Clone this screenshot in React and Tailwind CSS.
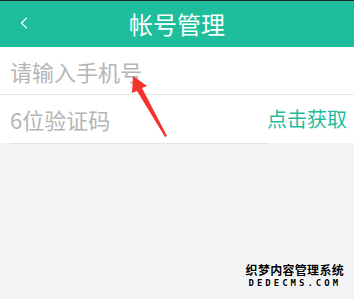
import { ChevronLeft } from 'lucide-react';

const cjk = { fontFamily: '"Noto Sans CJK SC", "Noto Sans", sans-serif' };

const App = () => {
  return (
    <div className="relative w-[354px] h-[299px] bg-[#f2f3f5] overflow-hidden" style={cjk}>
      <div className="h-px bg-[#1c2b2a]" />
      <header className="relative h-[46px] bg-[#1ebd9b] flex items-center justify-center">
        <ChevronLeft className="absolute left-[14px] top-[11px] w-[20px] h-[22px] text-white" strokeWidth={1.4} />
        <h1 className="text-[24px] leading-none text-white">帐号管理</h1>
      </header>

      <div className="bg-white">
        <div className="h-[48px] flex items-center pl-[10px] border-b border-[#e8e8e8]">
          <span className="text-[22px] leading-none text-[#b5b5b5]">请输入手机号</span>
        </div>
        <div className="h-[48px] flex items-center justify-between pl-[10px] pr-[7px]">
          <span className="text-[22px] leading-none text-[#b5b5b5]">6位验证码</span>
          <span className="text-[20px] leading-none text-[#1ebd9b]">点击获取</span>
        </div>
      </div>
      <div className="ml-[10px] w-[258px] h-px bg-[#e3e3e3]" />

      {/* red annotation arrow */}
      <svg className="absolute left-0 top-0" width="354" height="299" viewBox="0 0 354 299">
        <polygon points="133,76 147,86 142,88 167,136 165,137 137,91 132,93" fill="#f5322d" />
      </svg>

      <div className="absolute right-[10px] top-[264px] flex flex-col items-center leading-none [text-shadow:1px_0_0_#fff,-1px_0_0_#fff,0_1px_0_#fff,0_-1px_0_#fff]">
        <span className="text-[12px] font-bold text-black tracking-[0.3px]">织梦内容管理系统</span>
        <span className="mt-[3px] text-[9px] font-bold text-black tracking-[3px]" style={{ fontFamily: '"DejaVu Sans Mono", monospace' }}>DEDECMS.COM</span>
      </div>
    </div>
  );
};

export default App;
